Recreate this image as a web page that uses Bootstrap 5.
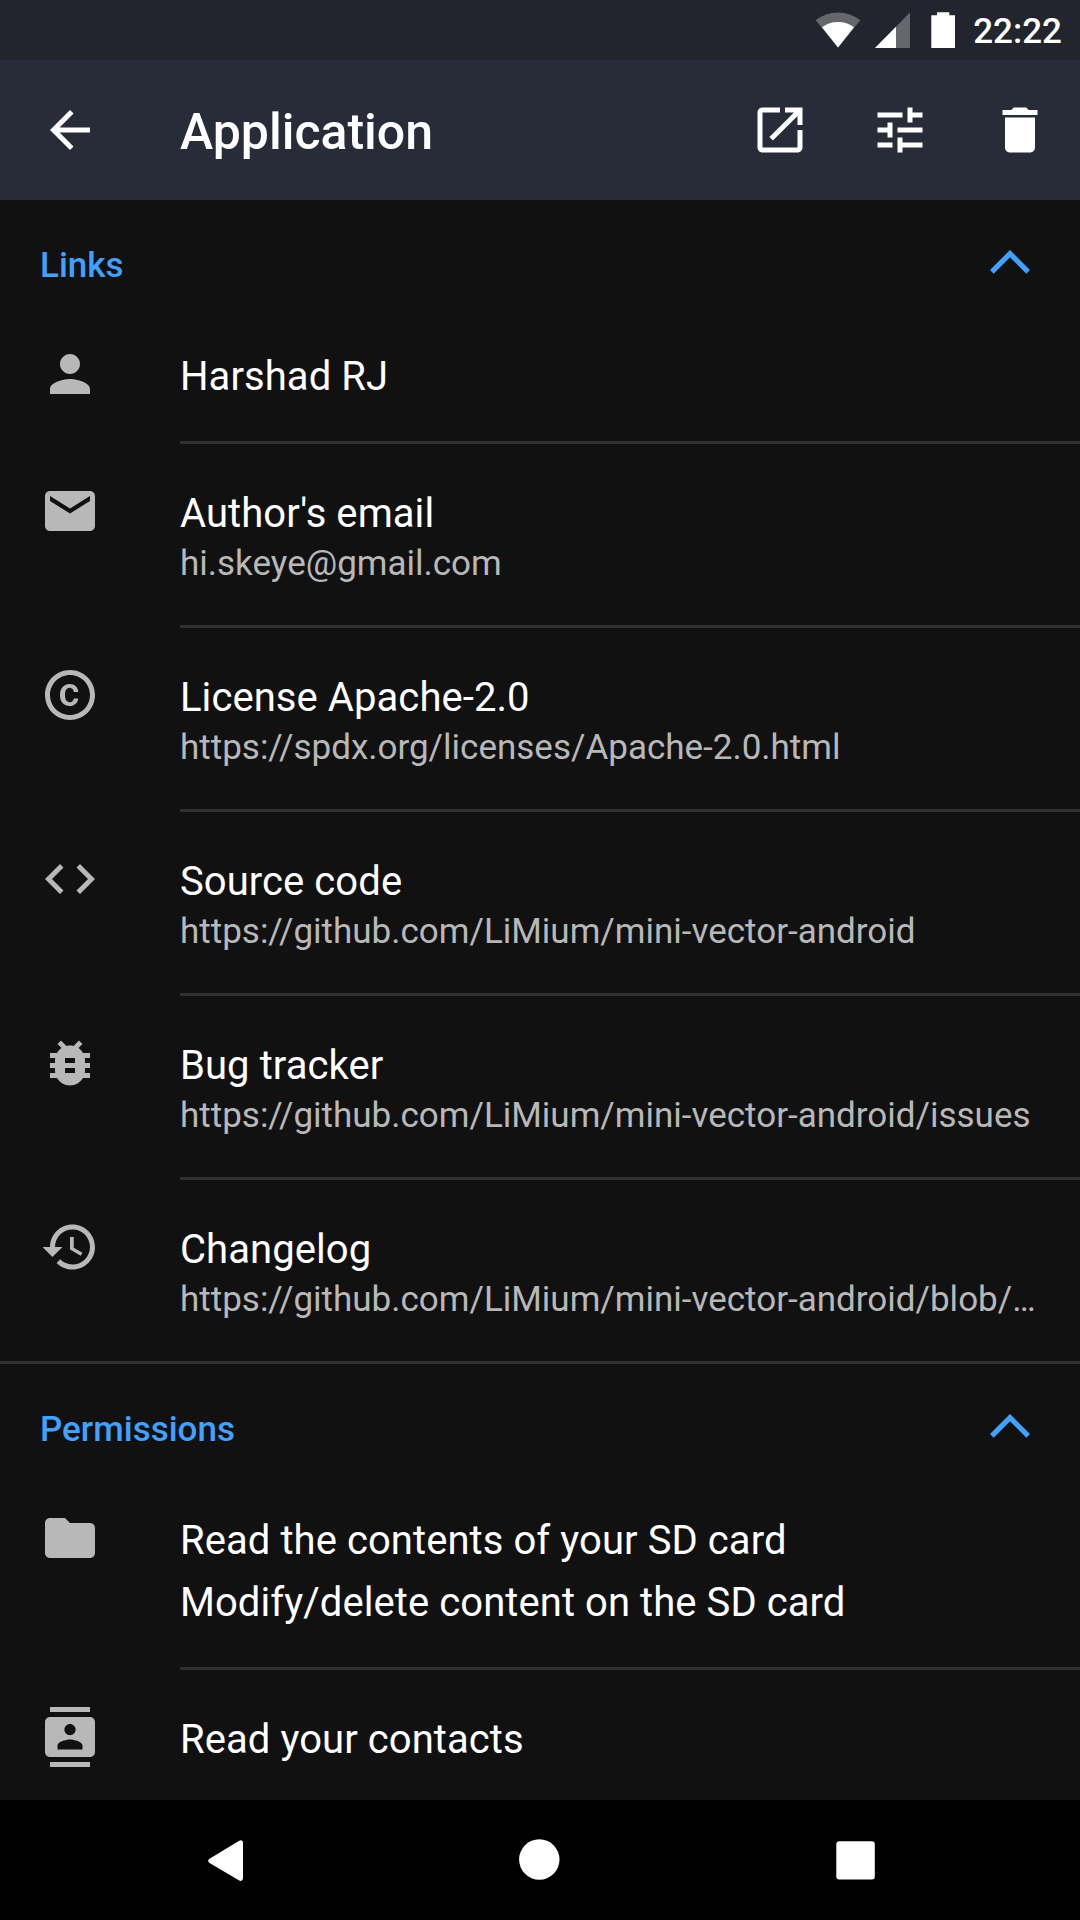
<!DOCTYPE html>
<html lang="en" data-bs-theme="dark">
<head>
<meta charset="utf-8">
<meta name="viewport" content="width=device-width, initial-scale=1">
<title>Application</title>
<link href="https://cdn.jsdelivr.net/npm/bootstrap@5.3.0/dist/css/bootstrap.min.css" rel="stylesheet">
<style>
  body { font-family: Roboto, sans-serif; background: #111; color: #fff; font-size: 40px; line-height: 47px; width: 1080px; height: 1920px; }
  svg { display: block; flex: none; fill: currentColor; }
  .status-bar { height: 60px; background: #22252d; font-size: 35px; font-weight: 500; line-height: 41px; }
  .clock { padding: 2px 18px 0 15px; }
  .app-bar { height: 140px; background: #272c38; padding: 0 30px 0 40px; }
  .app-title { font-size: 50px; font-weight: 500; line-height: 59px; margin-left: 80px; padding-top: 5px; }
  .app-actions { gap: 60px; }
  .ic { width: 60px; height: 60px; }
  .section-head { height: 107px; padding: 45px 50px 0 40px; color: #42a0ff; }
  .section-head h2 { font-size: 35px; font-weight: 500; line-height: 41px; color: inherit; }
  .section-block + .section-block { border-top: 3px solid #303030; }
  .section-block + .section-block .section-head { height: 107px; }
  .chevron { width: 40px; height: 24px; margin-top: 5px; fill: none; stroke: currentColor; stroke-width: 5.2; }
  .entry { padding-left: 40px; gap: 80px; }
  .entry .ic { margin-top: 37px; color: #b8b8b8; }
  .entry-body { min-width: 0; padding: 46px 33px 41px 0; border-bottom: 3px solid #303030; letter-spacing: .07px; }
  .entry:last-child .entry-body { border-bottom: 0; }
  .entry-sub { font-size: 35px; line-height: 41px; margin-top: 6px; color: #b8b8b8; letter-spacing: 0; }
  .entry-extra { margin-top: 15px; }
  .nav-keys { height: 120px; background: #000; }
</style>
</head>
<body class="d-flex flex-column overflow-hidden">
  <header>
    <div class="status-bar d-flex align-items-center justify-content-end">
      <svg width="144" height="60" viewBox="814 0 144 60">
        <path fill="#66676c" d="M838 47.500 815.700 20.300Q825.500 12.500 838 12.500T860.300 20.300Z"/>
        <path d="M838 47.500 822 27.200Q829 22 838 22T854 27.200Z"/>
        <path fill="#66676c" d="M910 12.500V48H875Z"/>
        <path d="M896 26.800V48H875Z"/>
        <path d="M931.300 15.200H937V12.200H949.300V15.200H955V48H931.300Z"/>
      </svg>
      <span class="clock">22:22</span>
    </div>
    <div class="app-bar d-flex align-items-center">
      <svg class="ic" viewBox="0 0 24 24"><path d="M20 11H7.830l5.590-5.590L12 4l-8 8 8 8 1.410-1.410L7.830 13H20z"/></svg>
      <h1 class="app-title mb-0 me-auto">Application</h1>
      <div class="app-actions d-flex">
        <svg class="ic" viewBox="0 0 24 24"><path d="M19 19H5V5h7V3H5c-1.110 0-2 .9-2 2v14c0 1.100.89 2 2 2h14c1.100 0 2-.9 2-2v-7h-2v7zM14 3v2h3.590l-9.830 9.830 1.410 1.410L19 6.410V10h2V3h-7z"/></svg>
        <svg class="ic" viewBox="0 0 24 24"><path d="M3 17v2h6v-2H3zM3 5v2h10V5H3zm10 16v-2h8v-2h-8v-2h-2v6h2zM7 9v2H3v2h4v2h2V9H7zm14 4v-2H11v2h10zm-6-4h2V7h4V5h-4V3h-2v6z"/></svg>
        <svg class="ic" viewBox="0 0 24 24"><path d="M6 19c0 1.100.9 2 2 2h8c1.100 0 2-.9 2-2V7H6v12zM19 4h-3.500l-1-1h-5l-1 1H5v2h14V4z"/></svg>
      </div>
    </div>
  </header>

  <main class="flex-grow-1 overflow-hidden">
    <section class="section-block">
      <div class="section-head d-flex justify-content-between">
        <h2 class="mb-0">Links</h2>
        <svg class="chevron" viewBox="0 0 40 24"><path d="M1.850 21.800 20 3.650 38.150 21.800"/></svg>
      </div>
      <div class="entry d-flex">
        <svg class="ic" viewBox="0 0 24 24"><path d="M12 12c2.210 0 4-1.790 4-4s-1.790-4-4-4-4 1.790-4 4 1.790 4 4 4zm0 2c-2.670 0-8 1.340-8 4v2h16v-2c0-2.660-5.330-4-8-4z"/></svg>
        <div class="entry-body flex-grow-1">
          <div>Harshad RJ</div>
        </div>
      </div>
      <div class="entry d-flex">
        <svg class="ic" viewBox="0 0 24 24"><path d="M20 4H4c-1.100 0-1.990.9-1.990 2L2 18c0 1.100.9 2 2 2h16c1.100 0 2-.9 2-2V6c0-1.100-.9-2-2-2zm0 4l-8 5-8-5V6l8 5 8-5v2z"/></svg>
        <div class="entry-body flex-grow-1">
          <div>Author's email</div>
          <div class="entry-sub text-truncate">hi.skeye@gmail.com</div>
        </div>
      </div>
      <div class="entry d-flex">
        <svg class="ic" viewBox="0 0 24 24"><path d="M10.080 10.860c.05-.33.16-.62.3-.87s.34-.46.59-.62c.24-.15.54-.22.91-.23.23.01.44.05.63.13.2.09.38.21.52.36s.25.33.34.53.13.42.14.64h1.790c-.02-.47-.11-.9-.28-1.290s-.4-.73-.7-1.010-.66-.5-1.080-.66-.88-.23-1.390-.23c-.65 0-1.220.11-1.700.34s-.88.53-1.200.92-.56.84-.71 1.360S8 11.290 8 11.870v.27c0 .58.080 1.120.23 1.640s.39.970.71 1.350.72.690 1.200.91 1.050.34 1.700.34c.47 0 .91-.080 1.320-.23s.77-.36 1.080-.63.56-.58.74-.94.29-.74.3-1.150h-1.790c-.01.21-.06.4-.15.58s-.21.33-.36.46-.32.23-.52.3c-.19.070-.39.090-.6.100-.36-.01-.66-.080-.89-.23-.25-.16-.45-.37-.59-.62s-.25-.55-.3-.88-.080-.67-.080-1v-.27c0-.35.030-.68.080-1.010zM12 2C6.480 2 2 6.480 2 12s4.480 10 10 10 10-4.480 10-10S17.520 2 12 2zm0 18c-4.410 0-8-3.590-8-8s3.590-8 8-8 8 3.590 8 8-3.590 8-8 8z"/></svg>
        <div class="entry-body flex-grow-1">
          <div>License Apache-2.0</div>
          <div class="entry-sub text-truncate">https://spdx.org/licenses/Apache-2.0.html</div>
        </div>
      </div>
      <div class="entry d-flex">
        <svg class="ic" viewBox="0 0 24 24"><path d="M9.400 16.600L4.800 12l4.600-4.600L8 6l-6 6 6 6 1.400-1.400zm5.200 0l4.600-4.600-4.600-4.600L16 6l6 6-6 6-1.400-1.400z"/></svg>
        <div class="entry-body flex-grow-1">
          <div>Source code</div>
          <div class="entry-sub text-truncate">https://github.com/LiMium/mini-vector-android</div>
        </div>
      </div>
      <div class="entry d-flex">
        <svg class="ic" viewBox="0 0 24 24"><path d="M20 8h-2.810c-.45-.78-1.070-1.450-1.820-1.960L17 4.410 15.590 3l-2.170 2.170C12.960 5.060 12.490 5 12 5s-.96.060-1.410.17L8.410 3 7 4.410l1.620 1.630C7.880 6.550 7.260 7.220 6.810 8H4v2h2.090c-.05.33-.09.66-.09 1v1H4v2h2v1c0 .34.040.67.090 1H4v2h2.810c1.040 1.790 2.970 3 5.190 3s4.150-1.210 5.190-3H20v-2h-2.090c.05-.33.09-.66.09-1v-1h2v-2h-2v-1c0-.34-.04-.67-.09-1H20V8zm-6 8h-4v-2h4v2zm0-4h-4v-2h4v2z"/></svg>
        <div class="entry-body flex-grow-1">
          <div>Bug tracker</div>
          <div class="entry-sub text-truncate">https://github.com/LiMium/mini-vector-android/issues</div>
        </div>
      </div>
      <div class="entry d-flex">
        <svg class="ic" viewBox="0 0 24 24"><path d="M13 3c-4.970 0-9 4.030-9 9H1l3.890 3.890.07.14L9 12H6c0-3.870 3.130-7 7-7s7 3.130 7 7-3.130 7-7 7c-1.930 0-3.680-.79-4.940-2.060l-1.420 1.420C8.270 19.990 10.510 21 13 21c4.970 0 9-4.030 9-9s-4.030-9-9-9zm-1 5v5l4.280 2.540.72-1.210-3.500-2.080V8H12z"/></svg>
        <div class="entry-body flex-grow-1">
          <div>Changelog</div>
          <div class="entry-sub text-truncate">https://github.com/LiMium/mini-vector-android/blob/…</div>
        </div>
      </div>
    </section>

    <section class="section-block">
      <div class="section-head d-flex justify-content-between">
        <h2 class="mb-0">Permissions</h2>
        <svg class="chevron" viewBox="0 0 40 24"><path d="M1.850 21.800 20 3.650 38.150 21.800"/></svg>
      </div>
      <div class="entry d-flex">
        <svg class="ic" viewBox="0 0 24 24"><path d="M10 4H4c-1.100 0-1.990.9-1.990 2L2 18c0 1.100.9 2 2 2h16c1.100 0 2-.9 2-2V8c0-1.100-.9-2-2-2h-8l-2-2z"/></svg>
        <div class="entry-body flex-grow-1">
          <div>Read the contents of your SD card</div>
          <div class="entry-extra">Modify/delete content on the SD card</div>
        </div>
      </div>
      <div class="entry d-flex">
        <svg class="ic" viewBox="0 0 24 24"><path d="M20 0H4v2h16V0zM4 24h16v-2H4v2zM20 4H4c-1.100 0-2 .9-2 2v12c0 1.100.9 2 2 2h16c1.100 0 2-.9 2-2V6c0-1.100-.9-2-2-2zm-8 2.750c1.240 0 2.250 1.010 2.250 2.250s-1.010 2.250-2.250 2.250S9.750 10.240 9.750 9 10.760 6.750 12 6.750zM17 17H7v-1.500c0-1.670 3.330-2.500 5-2.500s5 .83 5 2.500V17z"/></svg>
        <div class="entry-body flex-grow-1">
          <div>Read your contacts</div>
        </div>
      </div>
    </section>
  </main>

  <nav class="nav-keys">
    <svg width="1080" height="120" viewBox="0 0 1080 120" fill="#fff">
      <path d="M240.500 42.800 210.800 60.800 240.500 78.300Z" stroke="#fff" stroke-width="5" stroke-linejoin="round"/>
      <circle cx="539.300" cy="59.500" r="20.200"/>
      <rect x="836.300" y="41.300" width="38.500" height="38.200" rx="3"/>
    </svg>
  </nav>
<script src="https://cdn.jsdelivr.net/npm/bootstrap@5.3.0/dist/js/bootstrap.bundle.min.js"></script>
</body>
</html>
